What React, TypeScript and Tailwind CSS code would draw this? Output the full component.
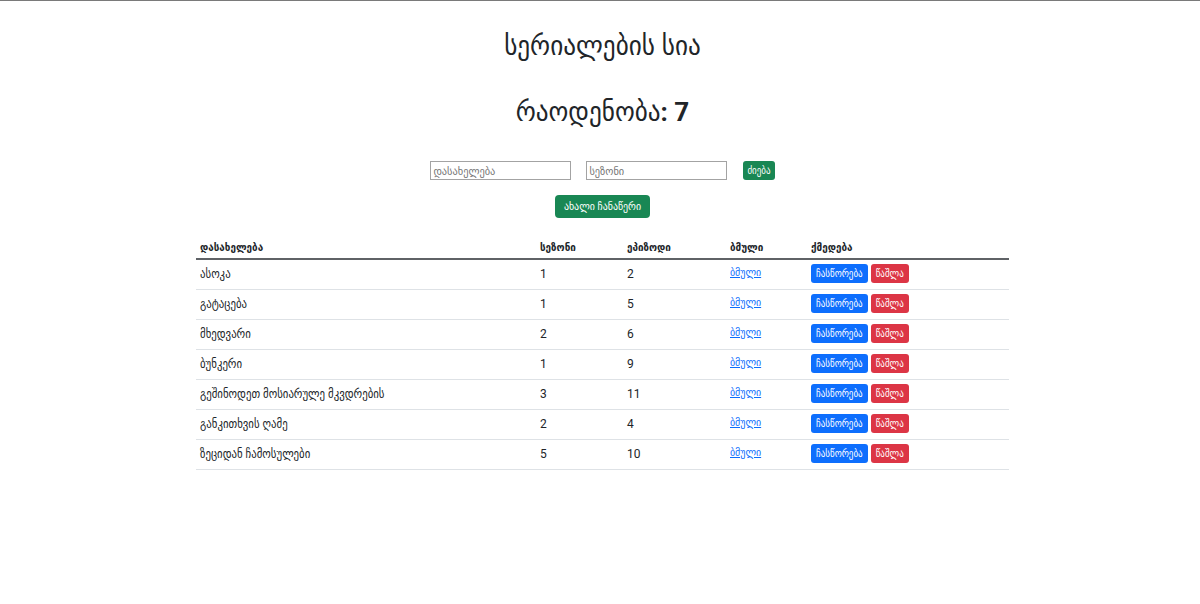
import React from "react";

const rows = [
  { name: "ასოკა", season: "1", ep: "2" },
  { name: "გატაცება", season: "1", ep: "5" },
  { name: "მხედვარი", season: "2", ep: "6" },
  { name: "ბუნკერი", season: "1", ep: "9" },
  { name: "გეშინოდეთ მოსიარულე მკვდრების", season: "3", ep: "11" },
  { name: "განკითხვის ღამე", season: "2", ep: "4" },
  { name: "ზეციდან ჩამოსულები", season: "5", ep: "10" },
];

const grid = "grid grid-cols-[340px_87px_103px_81px_202px]";

export default function App() {
  return (
    <div
      className="min-h-screen bg-white border-t border-[#7a7a7a] text-[#212529] pl-[5px]"
      style={{ fontFamily: 'Roboto, "DejaVu Sans Condensed", "DejaVu Sans", sans-serif' }}
    >
      <h1 className="text-center text-[28px] leading-[36px] font-normal mt-[27px]">სერიალების სია</h1>
      <h2 className="text-center text-[28px] leading-[36px] font-normal mt-[30px]">
        რაოდენობა<span className="font-bold text-[26px]">: 7</span>
      </h2>
      <div className="flex justify-center items-center mt-[31px]">
        <input
          placeholder="დასახელება"
          className="w-[141px] h-[19px] border border-[#a3a3a3] px-[2px] text-[11.5px] placeholder:text-[#757575] outline-none"
        />
        <input
          placeholder="სეზონი"
          className="w-[141px] h-[19px] border border-[#a3a3a3] px-[2px] text-[11.5px] placeholder:text-[#757575] outline-none ml-[15px]"
        />
        <button className="ml-[16px] h-[19px] px-[4px] bg-[#198754] text-white text-[10px] rounded-[3px] leading-none">
          ძიება
        </button>
      </div>
      <div className="flex justify-center mt-[15px]">
        <button className="h-[23px] px-[9px] bg-[#198754] text-white text-[11px] rounded-[4px] leading-none">
          ახალი ჩანაწერი
        </button>
      </div>
      <div className="w-[813px] mx-auto mt-[12px] text-[12px]">
        <div className={`${grid} h-[30px] items-center pt-[8px] border-b-2 border-[#5f6266] font-bold text-[11px]`}>
          <div className="px-[4px]">დასახელება</div>
          <div className="px-[4px]">სეზონი</div>
          <div className="px-[4px]">ეპიზოდი</div>
          <div className="px-[4px]">ბმული</div>
          <div className="px-[4px]">ქმედება</div>
        </div>
        {rows.map((r) => (
          <div key={r.name} className={`${grid} h-[30px] items-center pb-[2px] border-b border-[#dee2e6]`}>
            <div className="px-[4px]">{r.name}</div>
            <div className="px-[4px]">{r.season}</div>
            <div className="px-[4px]">{r.ep}</div>
            <div className="px-[4px] text-[11px]">
              <a href="#" className="text-[#0d6efd] underline">ბმული</a>
            </div>
            <div className="px-[4px] flex gap-[3px]">
              <button className="h-[19px] px-[5px] bg-[#0d6efd] text-white text-[10px] rounded-[3px] leading-none">
                ჩასწორება
              </button>
              <button className="h-[19px] px-[5px] bg-[#dc3545] text-white text-[10px] rounded-[3px] leading-none">
                წაშლა
              </button>
            </div>
          </div>
        ))}
      </div>
    </div>
  );
}
